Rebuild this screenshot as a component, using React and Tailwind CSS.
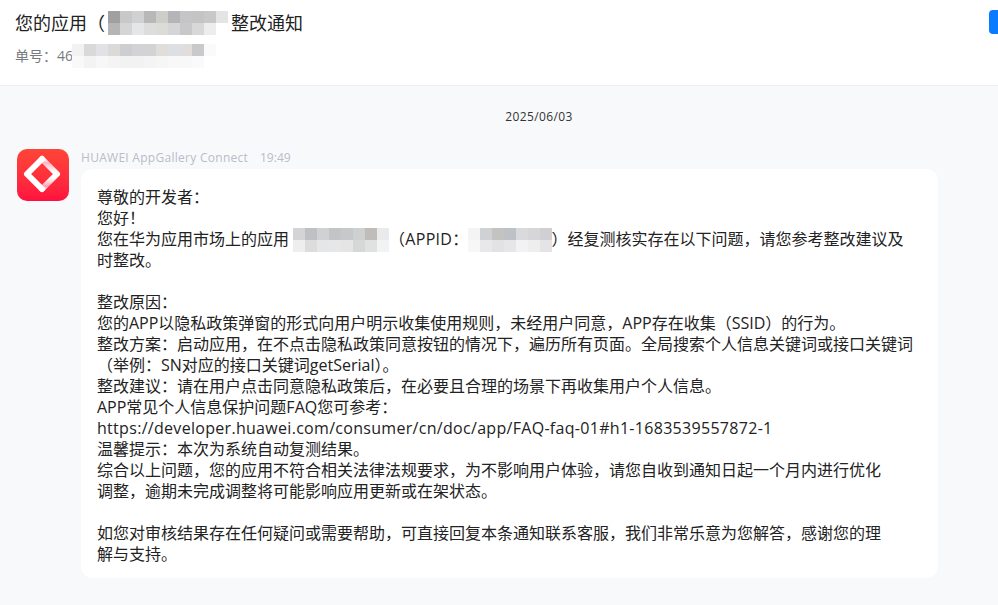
const FONT = "font-['Open_Sans','Noto_Sans_CJK_SC',sans-serif]";

function Mosaic({ rows, className = "" }) {
  return (
    <span className={"inline-flex flex-col align-middle overflow-hidden shrink-0 " + className}>
      {rows.map((row, i) => (
        <span key={i} className="flex">
          {row.map((c, j) => (
            <span key={j} className={"block w-[12px] h-[12px] shrink-0 " + c} />
          ))}
        </span>
      ))}
    </span>
  );
}

const titleRows = [
  ["bg-[#a0a0a0]", "bg-[#c8c8c8]", "bg-[#d0d1d3]", "bg-[#b8b8b8]", "bg-[#cdcdc9]", "bg-[#b5b5b8]", "bg-[#c5c5c8]", "bg-[#c4c4c4]", "bg-[#c8c8c8]", "bg-[#e4e4e4]"],
  ["bg-[#b5b5b5]", "bg-[#d5d5d5]", "bg-[#e5e6e8]", "bg-[#dcdddc]", "bg-[#dddbd8]", "bg-[#d5d5d8]", "bg-[#c8c8c8]", "bg-[#d8d8d8]", "bg-[#ededed]", "bg-[#ffffff]"],
];
const ticketRows = [
  ["bg-[#f0f2f3]", "bg-[#dbd8d8]", "bg-[#e0e2e5]", "bg-[#dcdad9]", "bg-[#cdced2]", "bg-[#d3d3d5]", "bg-[#d3d3d5]", "bg-[#e0dedb]", "bg-[#dcdfe3]", "bg-[#e0dddc]", "bg-[#c9c9cb]", "bg-[#fafafa]"],
  ["bg-[#f9f9f9]", "bg-[#f3f3f3]", "bg-[#f7f7f8]", "bg-[#f4f4f4]", "bg-[#f2f2f3]", "bg-[#f2f2f3]", "bg-[#f4f4f4]", "bg-[#f6f6f6]", "bg-[#f8f8f8]", "bg-[#f8f8f8]", "bg-[#fafafa]", "bg-[#ffffff]"],
];
const nameRows = [
  ["bg-[#d4d4d6]", "bg-[#bfc0c4]", "bg-[#d0d1d2]", "bg-[#c4c3c8]", "bg-[#c6c8c9]", "bg-[#cfd0d0]", "bg-[#bfbcba]", "bg-[#e8eaec]"],
  ["bg-[#eeeeee]", "bg-[#dcdcdc]", "bg-[#e5e6e8]", "bg-[#e6e7e7]", "bg-[#e6e5e5]", "bg-[#d6d8d8]", "bg-[#e1e1e1]", "bg-[#f2f3f4]"],
];
const idRows = [
  ["bg-[#f4f4f4]", "bg-[#cfd1d5]", "bg-[#c5c3c2]", "bg-[#bec2c6]", "bg-[#dadadc]", "bg-[#d6d6d8]", "bg-[#d0d0d4]"],
  ["bg-[#f7f7f7]", "bg-[#e8e8ea]", "bg-[#e2e2e2]", "bg-[#e6e6e8]", "bg-[#f2f2f4]", "bg-[#eeeeee]", "bg-[#e4e4e6]"],
];

export default function App() {
  return (
    <div className={"w-[998px] h-[605px] overflow-hidden flex flex-col bg-[#f8f9fb] " + FONT}>
      <header className="h-[86px] shrink-0 bg-white border-b border-[#eeeff2] flex items-start justify-between pl-[15px]">
        <div className="flex flex-col">
          <div className="h-[24px] mt-[11px] flex items-center text-[18px] leading-[24px] text-[#222222] whitespace-nowrap">
            <span>您的应用（</span>
            <Mosaic rows={titleRows} className="ml-[3px] mr-[3px]" />
            <span>整改通知</span>
          </div>
          <div className="h-[24px] mt-[9px] flex items-center text-[14px] leading-[24px] text-[#777b80] whitespace-nowrap">
            <span>单号：46</span>
            <Mosaic rows={ticketRows} className="ml-[-1px]" />
          </div>
        </div>
        <div className="w-[9px] h-[24px] mt-[10px] rounded-l-[4px] bg-[#0a7bff]" />
      </header>

      <div className="h-[20px] mt-[21px] flex items-center justify-center pl-[80px] text-[12px] leading-[20px] tracking-[0.4px] text-[#333333]">
        2025/06/03
      </div>

      <div className="flex mt-[22px] pl-[17px] gap-[12px]">
        <div className="w-[52px] h-[52px] rounded-[10px] shrink-0 bg-gradient-to-b from-[#ff4438] to-[#ff0f3f] flex items-center justify-center">
          <svg width="52" height="52" viewBox="0 0 52 52">
            <defs>
              <linearGradient id="ribbon" gradientUnits="userSpaceOnUse" x1="0" y1="10" x2="0" y2="41">
                <stop offset="0" stopColor="#ffffff" />
                <stop offset="0.12" stopColor="#ffb4c0" />
                <stop offset="0.42" stopColor="#ffffff" />
                <stop offset="0.62" stopColor="#ffffff" />
                <stop offset="0.88" stopColor="#ff9fae" />
                <stop offset="1" stopColor="#ffffff" />
              </linearGradient>
            </defs>
            <path d="M25 10 L40 25 L25 40" fill="none" stroke="url(#ribbon)" strokeWidth="6" strokeLinecap="round" strokeLinejoin="round" />
            <path d="M25 10 L10 25 L25 40" fill="none" stroke="#ffffff" strokeWidth="6" strokeLinecap="round" strokeLinejoin="round" />
          </svg>
        </div>

        <div className="flex flex-col w-[857px]">
          <div className="h-[18px] flex items-center text-[12px] leading-[18px] text-[#b9bcc9] whitespace-nowrap">
            <span className="w-[179px] tracking-[0.28px]">HUAWEI AppGallery Connect</span>
            <span>19:49</span>
          </div>
          <div className="mt-[2px] h-[409px] bg-white rounded-[12px] pl-[16px] pr-[16px] pt-[18px] text-[16px] leading-[21px] text-[#222222] whitespace-nowrap">
            <div>尊敬的开发者：</div>
            <div>您好！</div>
            <div className="flex items-center h-[21px]">
              <span>您在华为应用市场上的应用</span>
              <Mosaic rows={nameRows} className="ml-[4px]" />
              <span className="tracking-[0.3px]">（APPID：</span>
              <Mosaic rows={idRows} className="ml-[-1px]" />
              <span>）经复测核实存在以下问题，请您参考整改建议及</span>
            </div>
            <div>时整改。</div>
            <div className="h-[21px]" />
            <div>整改原因：</div>
            <div>您的APP以隐私政策弹窗的形式向用户明示收集使用规则，未经用户同意，APP存在收集（SSID）的行为。</div>
            <div>整改方案：启动应用，在不点击隐私政策同意按钮的情况下，遍历所有页面。全局搜索个人信息关键词或接口关键词</div>
            <div>（举例：SN对应的接口关键词getSerial）。</div>
            <div>整改建议：请在用户点击同意隐私政策后，在必要且合理的场景下再收集用户个人信息。</div>
            <div>APP常见个人信息保护问题FAQ您可参考：</div>
            <div className="tracking-[0.3px]">https://developer.huawei.com/consumer/cn/doc/app/FAQ-faq-01#h1-1683539557872-1</div>
            <div>温馨提示：本次为系统自动复测结果。</div>
            <div>综合以上问题，您的应用不符合相关法律法规要求，为不影响用户体验，请您自收到通知日起一个月内进行优化</div>
            <div>调整，逾期未完成调整将可能影响应用更新或在架状态。</div>
            <div className="h-[21px]" />
            <div>如您对审核结果存在任何疑问或需要帮助，可直接回复本条通知联系客服，我们非常乐意为您解答，感谢您的理</div>
            <div>解与支持。</div>
          </div>
        </div>
      </div>
    </div>
  );
}
